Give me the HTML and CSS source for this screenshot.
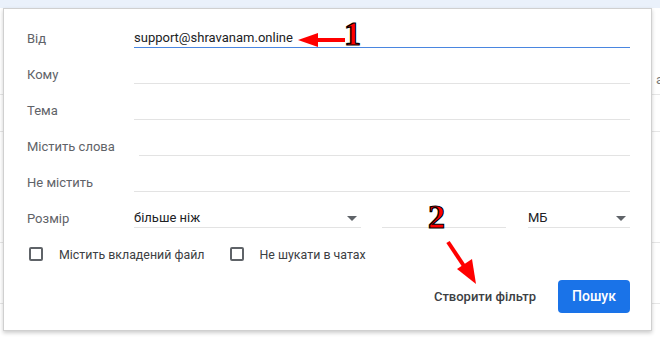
FILE: index.html
```html
<!DOCTYPE html>
<html lang="uk">
<head>
    <meta charset="UTF-8">
    <meta name="viewport" content="width=device-width, initial-scale=1.0">
    <title>Пошук</title>
    <link rel="stylesheet" href="styles.css">
</head>
<body>
    <div class="app">
        <div class="topbar"></div>
        <div class="mail-list">
            <div class="mail-row row-a"><span class="peek">a</span></div>
            <div class="mail-row row-b"></div>
            <div class="mail-row row-c"></div>
            <div class="mail-row row-d"></div>
        </div>

        <form class="search-dialog">
            <div class="field">
                <label>Від</label>
                <div class="input active">support@shravanam.online</div>
            </div>
            <div class="field">
                <label>Кому</label>
                <div class="input"></div>
            </div>
            <div class="field">
                <label>Тема</label>
                <div class="input"></div>
            </div>
            <div class="field">
                <label>Містить слова</label>
                <div class="input shifted"></div>
            </div>
            <div class="field">
                <label>Не містить</label>
                <div class="input"></div>
            </div>
            <div class="field">
                <label>Розмір</label>
                <div class="size-group">
                    <div class="select size-op">більше ніж <span class="caret"></span></div>
                    <div class="input size-num"></div>
                    <div class="select size-unit">МБ <span class="caret"></span></div>
                </div>
            </div>
            <div class="checks">
                <div class="check"><span class="box"></span>Містить вкладений файл</div>
                <div class="check"><span class="box"></span>Не шукати в чатах</div>
            </div>
            <div class="actions">
                <span class="text-btn">Створити фільтр</span>
                <span class="primary-btn">Пошук</span>
            </div>
        </form>

        <svg class="marks" width="660" height="345" viewBox="0 0 660 345">
            <line x1="345" y1="40" x2="314" y2="40" stroke="#f00" stroke-width="4"/>
            <polygon points="298,40 318,33 318,47" fill="#f00"/>
            <line x1="448" y1="242" x2="464" y2="266" stroke="#f00" stroke-width="4"/>
            <polygon points="476,284 457,269 472,259" fill="#f00"/>
        </svg>
        <span class="mark mark-1">1</span>
        <span class="mark mark-2">2</span>
    </div>
</body>
</html>
```

FILE: styles.css
```css
body {
    margin: 0;
    background: #fff;
    font-family: Roboto, Arial, sans-serif;
    font-size: 13px;
    color: #202124;
    overflow: hidden;
}

.app {
    position: relative;
    width: 660px;
    height: 345px;
}

.topbar {
    height: 8px;
    background: #eaf1fb;
}

.mail-row {
    border-bottom: 1px solid #e6e6e6;
    display: flex;
    justify-content: flex-end;
    align-items: center;
}

.row-a { height: 87px; padding-top: 56px; box-sizing: border-box; }
.row-b { height: 36px; }
.row-c { height: 110px; }
.row-d { height: 60px; }

.peek {
    color: #777;
    margin-right: -3px;
}

/* the popover itself */
.search-dialog {
    position: absolute;
    left: 3px;
    top: 8px;
    width: 649px;
    box-sizing: border-box;
    background: #fff;
    border: 1px solid #d0d0d0;
    box-shadow: 0 2px 4px rgba(0, 0, 0, 0.2);
    padding: 11px 21px 17px 23px;
    margin: 0;
}

.field {
    display: grid;
    grid-template-columns: 107px 1fr;
    align-items: center;
    height: 36px;
}

.field label {
    color: #5f6368;
}

.input {
    height: 18px;
    line-height: 18px;
    border-bottom: 1px solid #e3e3e3;
}

.input.active {
    border-bottom-color: #4a86e0;
    color: #202124;
}

.input.shifted {
    margin-left: 5px;
}

.size-group {
    display: flex;
    align-items: center;
}

.select {
    position: relative;
    height: 18px;
    line-height: 18px;
    border-bottom: 1px solid #e3e3e3;
    color: #202124;
}

.size-op { width: 227px; }
.size-num { width: 124px; margin-left: 21px; }
.size-unit { width: 102px; margin-left: 22px; }

.caret {
    position: absolute;
    right: 4px;
    top: 7px;
    border-left: 5px solid transparent;
    border-right: 5px solid transparent;
    border-top: 5px solid #5f6368;
}

.checks {
    display: flex;
    gap: 25px;
    height: 36px;
    align-items: center;
    padding-left: 2px;
    font-size: 12.4px;
}

.check {
    display: flex;
    align-items: center;
    color: #3c4043;
}

.box {
    width: 10px;
    height: 10px;
    border: 2px solid #5f6368;
    border-radius: 2px;
    margin-right: 16px;
}

.actions {
    display: flex;
    justify-content: flex-end;
    align-items: center;
    gap: 22px;
    margin-top: 8px;
}

.text-btn {
    color: #3c4043;
    font-weight: 500;
}

.primary-btn {
    background: #1a73e8;
    color: #fff;
    font-weight: 500;
    font-size: 14px;
    width: 72px;
    height: 33px;
    line-height: 33px;
    text-align: center;
    border-radius: 4px;
}

.marks {
    position: absolute;
    left: 0;
    top: 0;
}

.mark {
    position: absolute;
    font-family: "Liberation Serif", serif;
    font-weight: bold;
    font-size: 34px;
    line-height: 1;
    color: #f00;
    -webkit-text-stroke: 1.2px #000;
}

.mark-1 { left: 344px; top: 17px; }
.mark-2 { left: 428px; top: 200px; }
```
